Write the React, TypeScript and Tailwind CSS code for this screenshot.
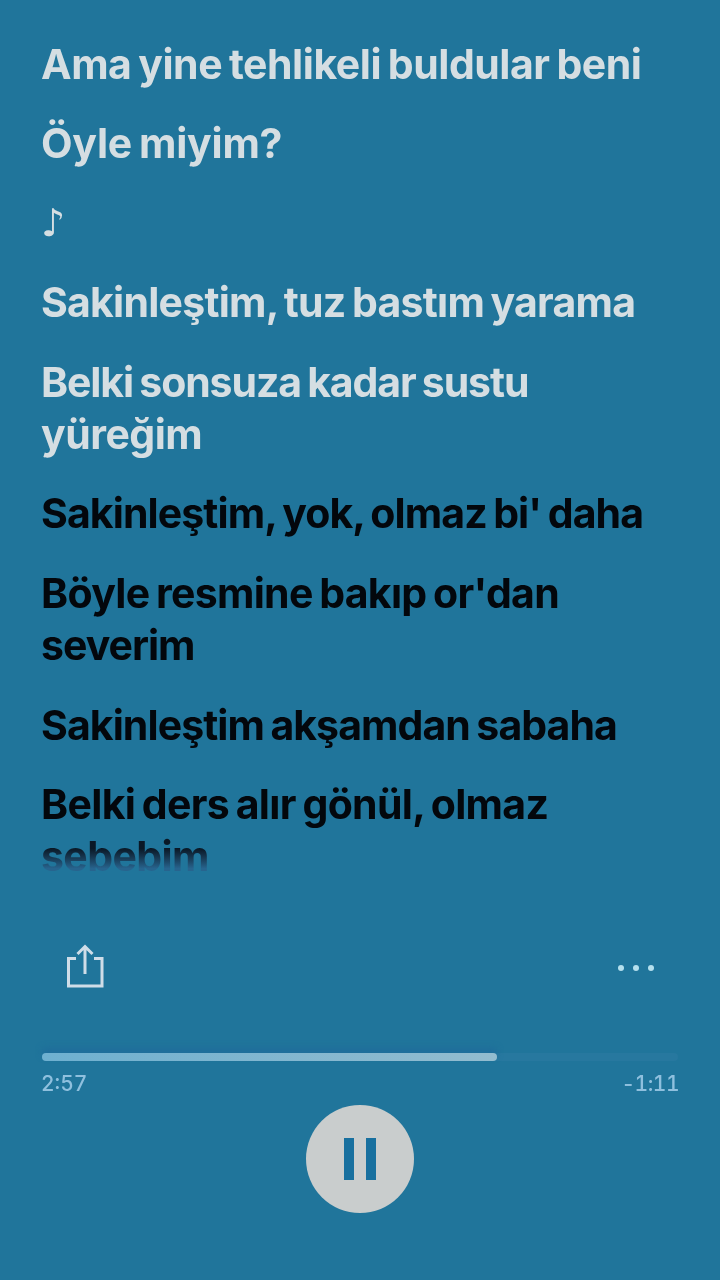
export default function App() {
  const light = "text-[#d5dee2]";
  const dark = "text-[#03070c]";
  const Line = ({ t, c }: { t: string; c: string }) => (
    <p className={c}>{t}</p>
  );
  return (
    <div className="w-[720px] h-[1280px] overflow-hidden bg-[#20759b] font-['Inter',sans-serif]">
      <div className="h-[900px] pt-[37.5px] px-[41px] flex flex-col gap-[27.6px] text-[41px] leading-[52px] font-bold [word-spacing:-2.4px] [filter:blur(0.5px)]">
        <Line t="Ama yine tehlikeli buldular beni" c={`${light} tracking-[-0.47px]`} />
        <Line t="Öyle miyim?" c={`${light} tracking-[-0.24px]`} />
        <p className="text-[#d5dee2] font-['DejaVu_Sans',sans-serif] font-normal text-[38px]">♪</p>
        <Line t="Sakinleştim, tuz bastım yarama" c={`${light} tracking-[-0.77px]`} />
        <p className={`${light} w-[560px]`}>
          <span className="tracking-[-1.1px]">Belki sonsuza kadar sustu</span>{" "}
          <span className="tracking-[-0.5px]">yüreğim</span>
        </p>
        <Line t="Sakinleştim, yok, olmaz bi' daha" c={`${dark} tracking-[-0.9px]`} />
        <p className={`${dark} w-[560px]`}>
          <span className="tracking-[-0.7px]">Böyle resmine bakıp or'dan</span>{" "}
          <span className="tracking-[-1px]">severim</span>
        </p>
        <Line t="Sakinleştim akşamdan sabaha" c={`${dark} tracking-[-0.92px]`} />
        <p className={`${dark} w-[560px] tracking-[-0.67px]`}>
          Belki ders alır gönül, olmaz{" "}
          <span className="tracking-[-0.6px] bg-gradient-to-b from-[#0a1826] from-[35%] to-[#27648e] to-[75%] bg-clip-text text-transparent">sebebim</span>
        </p>
      </div>

      <div className="flex items-center justify-between pl-[65px] pr-[66px] h-[54px] mt-[40px]">
        <svg width="40" height="46" viewBox="0 0 40 46" fill="none" stroke="#cfdde8" strokeWidth="3" className="[filter:blur(0.4px)]">
          <path d="M11 14.5H3.5V42H37V14.5H29" />
          <path d="M20 30V3M12.5 10L20 2.5L27.5 10" />
        </svg>
        <div className="flex gap-[9px] translate-y-[1px]">
          <span className="w-[6px] h-[6px] rounded-full bg-[#b5e0ee]" />
          <span className="w-[6px] h-[6px] rounded-full bg-[#b5e0ee]" />
          <span className="w-[6px] h-[6px] rounded-full bg-[#b5e0ee]" />
        </div>
      </div>

      <div className="mt-[59px] mx-[42px] h-[8px] rounded-full bg-[#27789f]">
        <div className="h-full w-[455px] rounded-full bg-gradient-to-r from-[#6eb0d0] to-[#93bccf] shadow-[0_-5px_6px_#1f6d9b]" />
      </div>
      <div className="mt-[11px] mx-[41px] flex justify-between text-[21px] leading-[24px] font-medium text-[#8fc0de] tabular-nums [filter:blur(0.4px)]">
        <span>2:57</span>
        <span className="tracking-[-0.5px]">-1:11</span>
      </div>

      <div className="mt-[9px] mx-auto w-[108px] h-[108px] rounded-full bg-[#c9cdcd] flex items-center justify-center gap-[12px]">
        <span className="w-[10px] h-[42px] bg-[#18709f]" />
        <span className="w-[10px] h-[42px] bg-[#18709f]" />
      </div>
    </div>
  );
}
